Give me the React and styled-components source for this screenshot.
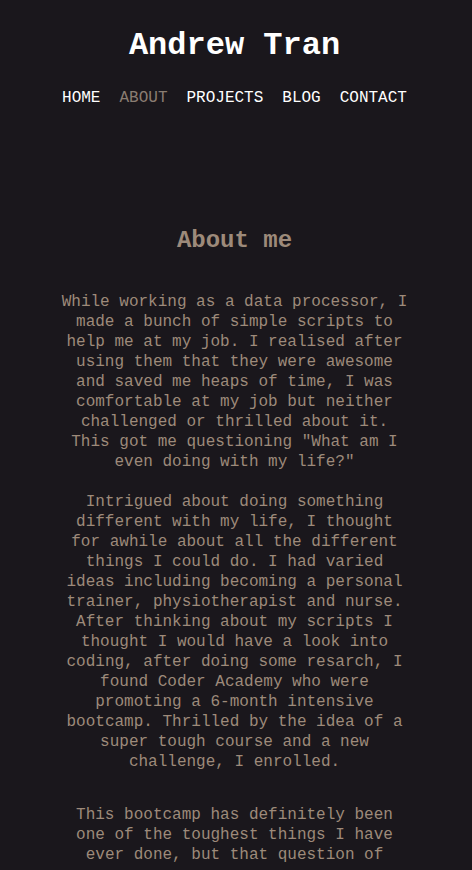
import React from "react";
import styled, { createGlobalStyle } from "styled-components";

const GlobalStyle = createGlobalStyle`
  html, body {
    margin: 0;
    padding: 0;
    background-color: #1a171c;
  }
  body {
    font-family: "Liberation Mono", "DejaVu Sans Mono", monospace;
  }
`;

const Page = styled.div`
  min-height: 870px;
  padding-right: 3px;
  background-color: #1a171c;
  color: #9d8a7a;
`;

const Header = styled.header`
  display: flex;
  flex-direction: column;
  align-items: center;
  padding-top: 26px;
`;

const Name = styled.h1`
  margin: 0;
  font-size: 32px;
  line-height: 40px;
  font-weight: bold;
  color: #ffffff;
`;

const Nav = styled.nav`
  display: flex;
  gap: 19px;
  margin-top: 22px;
`;

const NavLink = styled.a`
  font-size: 16px;
  line-height: 20px;
  color: ${(p) => (p.$active ? "#8a7d72" : "#ffffff")};
  text-decoration: none;
`;

const Section = styled.section`
  display: flex;
  flex-direction: column;
  align-items: center;
  padding-top: 118px;
`;

const Heading = styled.h2`
  margin: 0;
  font-size: 24px;
  line-height: 30px;
  font-weight: bold;
  color: #9d8a7a;
`;

const Text = styled.p`
  width: 350px;
  margin: ${(p) => p.$top}px 0 0;
  font-size: 16px;
  line-height: 20px;
  text-align: center;
`;

function App() {
  return (
    <Page>
      <GlobalStyle />
      <Header>
        <Name>Andrew Tran</Name>
        <Nav>
          <NavLink href="#">HOME</NavLink>
          <NavLink href="#" $active>ABOUT</NavLink>
          <NavLink href="#">PROJECTS</NavLink>
          <NavLink href="#">BLOG</NavLink>
          <NavLink href="#">CONTACT</NavLink>
        </Nav>
      </Header>
      <Section>
        <Heading>About me</Heading>
        <Text $top={36}>
          While working as a data processor, I made a bunch of simple scripts to
          help me at my job. I realised after using them that they were awesome
          and saved me heaps of time, I was comfortable at my job but neither
          challenged or thrilled about it. This got me questioning "What am I
          even doing with my life?"
        </Text>
        <Text $top={20}>
          Intrigued about doing something different with my life, I thought for
          awhile about all the different things I could do. I had varied ideas
          including becoming a personal trainer, physiotherapist and nurse.
          After thinking about my scripts I thought I would have a look into
          coding, after doing some resarch, I found Coder Academy who were
          promoting a 6-month intensive bootcamp. Thrilled by the idea of a
          super tough course and a new challenge, I enrolled.
        </Text>
        <Text $top={33}>
          This bootcamp has definitely been one of the toughest things I have
          ever done, but that question of
        </Text>
      </Section>
    </Page>
  );
}

export default App;
